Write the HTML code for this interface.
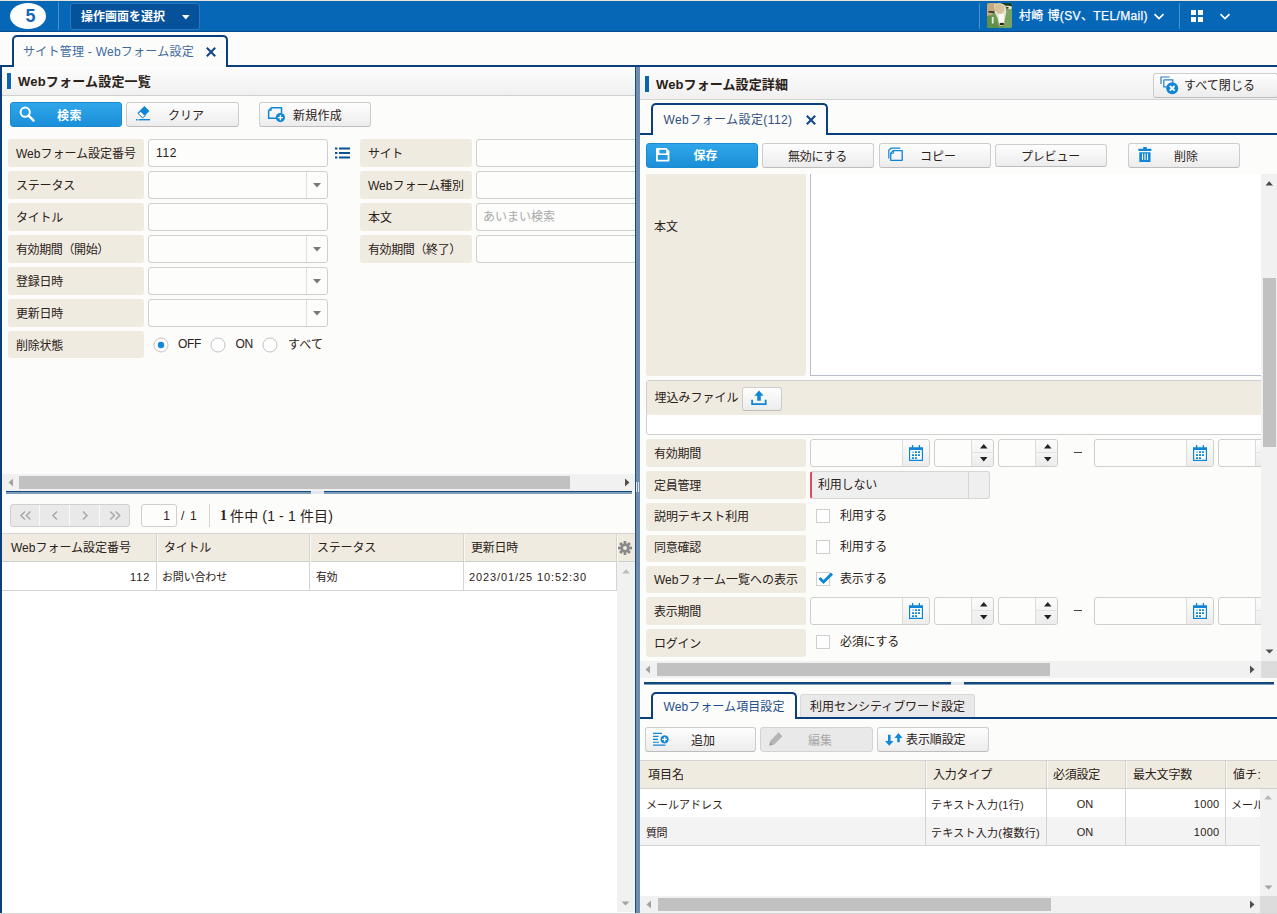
<!DOCTYPE html>
<html lang="ja"><head><meta charset="utf-8"><title>サイト管理 - Webフォーム設定</title>
<style>
html,body{margin:0;padding:0;}
body{width:1277px;height:914px;overflow:hidden;background:#fcfcfa;font-family:"Liberation Sans", "Noto Sans CJK JP", sans-serif;position:relative;}
#r{position:absolute;left:0;top:0;width:1277px;height:914px;overflow:hidden;}
#r div,#r span,#r svg{position:absolute;}
.t{white-space:nowrap;}
.i{display:block;overflow:visible;}
.btn{box-sizing:border-box;border:1px solid #cdcdcd;border-bottom-color:#bdbdbd;border-radius:3px;background:linear-gradient(#fefefe,#ececec);}
.btn.pri{border-color:#1b8ad0;background:linear-gradient(#2fa6ea,#1b8fd8);}
.btn.dis{background:#e9e9e9;border-color:#d3d3d3;}
.lab{background:#efebe0;border-radius:3px;}
.inp{box-sizing:border-box;border:1px solid #cfcfcf;border-radius:3px;background:#fdfdfc;}
</style></head>
<body><div id="r">
<div style="left:0px;top:0px;width:1277px;height:31.8px;background:#0667b7;border-bottom:1.6px solid #064b90;box-sizing:border-box;"></div>
<div style="left:0px;top:0px;width:1277px;height:0.8px;background:#e9e4da;"></div>
<svg class="i" style="left:10px;top:3px;" width="36" height="26" viewBox="0 0 36 26"><ellipse cx="18" cy="13" rx="18" ry="13" fill="#fff"/></svg>
<span id="t1" class="t" style="top:6.3px;font-size:18px;line-height:20px;color:#1668b5;font-weight:bold;left:-119.5px;width:300px;text-align:center;">5</span>
<div style="left:58px;top:2px;width:1px;height:28px;background:#4a8fcc;"></div>
<div style="left:70px;top:2.5px;width:129.5px;height:27px;background:#05529b;border:1px solid #2d78bd;border-radius:3px;box-sizing:border-box;"></div>
<span id="t2" class="t" style="top:7.0px;font-size:12px;line-height:20px;color:#fff;letter-spacing:-0.002px;font-weight:bold;left:81px;">操作画面を選択</span>
<svg class="i" style="left:181.8px;top:14.7px;" width="8" height="5" viewBox="0 0 8 5"><path d="M0 0h7.6L3.8 4.5z" fill="#fff"/></svg>
<div style="left:979px;top:3px;width:1px;height:26px;background:#4a8fcc;"></div>
<svg class="i" style="left:987px;top:3px;" width="25" height="25" viewBox="0 0 25 25"><defs><clipPath id="av"><rect width="25" height="25" rx="2.2"/></clipPath><filter id="bl" x="-20%" y="-20%" width="140%" height="140%"><feGaussianBlur stdDeviation="0.7"/></filter></defs><g clip-path="url(#av)"><rect width="25" height="25" fill="#6d9a52"/><g filter="url(#bl)"><path d="M0 0h9l-2 9-3 4-4 1z" fill="#c2aa7c"/><path d="M14 0h11v3l-10-1z" fill="#1d3b2a"/><path d="M0 13l5-1 1 5 4 3 1 5H0z" fill="#5f8f4a"/><path d="M18 8l7-3v20h-8z" fill="#79a45e"/><path d="M7 2c3-2.500 9-2.500 11.500 1l.8 6-1.300 6-1 6.500c-1 2-4 2-5 0l-1.500-6.500L8 10z" fill="#e9e2d0"/><path d="M8 2.500c3-2 7-2 9.500 0.500l-.5 5-3 3-3-.5-3-3z" fill="#d6c39c"/><path d="M11.500 11h5.500l-.5 9.500h-4z" fill="#fbfaf6"/><ellipse cx="21.500" cy="4.600" rx="3.200" ry="1.700" fill="#f3efe6"/><ellipse cx="20.300" cy="4.800" rx="1.600" ry="0.900" fill="#3a2f2a"/><path d="M1.500 8l5.500.3v1.600l-5.500-.3z" fill="#2f2a24"/><rect x="4.800" y="14" width="1.800" height="6.500" fill="#efeadf"/><ellipse cx="14.800" cy="21" rx="2.300" ry="1.300" fill="#27211f"/></g></g></svg>
<span id="t3" class="t" style="top:6.199999999999999px;font-size:12px;line-height:20px;color:#fff;letter-spacing:0.371px;left:1019px;-webkit-text-stroke:0.25px #fff;">村崎 博(SV、TEL/Mail)</span>
<svg class="i" style="left:1153px;top:13px;" width="12" height="7" viewBox="0 0 12 7"><path d="M1.5 1.2L6 5.5l4.5-4.3" fill="none" stroke="#fff" stroke-width="1.7"/></svg>
<div style="left:1179px;top:3px;width:1px;height:26px;background:#4a8fcc;"></div>
<svg class="i" style="left:1191px;top:10px;" width="12.5" height="12.5" viewBox="0 0 12.5 12.5"><path d="M0 0h5v5H0zM7 0h5v5H7zM0 7h5v5H0zM7 7h5v5H7z" fill="#fff"/></svg>
<svg class="i" style="left:1219px;top:13px;" width="12" height="7" viewBox="0 0 12 7"><path d="M1.5 1.2L6 5.5l4.5-4.3" fill="none" stroke="#fff" stroke-width="1.7"/></svg>
<div style="left:0px;top:64.8px;width:1277px;height:2px;background:#0b3f7b;"></div>
<div style="left:11.5px;top:34.8px;width:216.5px;height:32px;border:2px solid #0b3f7b;border-bottom:none;border-radius:5px 5px 0 0;background:#fcfcfa;box-sizing:border-box;"></div>
<span id="t4" class="t" style="top:42.0px;font-size:12px;line-height:20px;color:#3f6a9e;letter-spacing:0.249px;left:23px;">サイト管理 - Webフォーム設定</span>
<svg class="i" style="left:205.6px;top:47.4px;" width="10" height="10" viewBox="0 0 10 10"><path d="M0.8 0.8l8.4 8.4M9.2 0.8l-8.400 8.4" stroke="#174886" stroke-width="2.1" fill="none"/></svg>
<div style="left:0px;top:67px;width:2.2px;height:847px;background:#0b3f7b;"></div>
<div style="left:2px;top:67px;width:633px;height:28px;background:linear-gradient(#fdfdfd,#f0f0f0);border-bottom:1px solid #d0d0d0;"></div>
<div style="left:7px;top:73px;width:4px;height:16px;background:#0b63b4;"></div>
<span id="t5" class="t" style="top:72.0px;font-size:13px;line-height:20px;color:#2b2118;letter-spacing:0.199px;font-weight:bold;left:18px;">Webフォーム設定一覧</span>
<div class="btn pri" style="left:10px;top:102px;width:112px;height:25px;"></div>
<svg class="i" style="left:19px;top:106px;" width="16" height="16" viewBox="0 0 16 16"><circle cx="6.2" cy="6.2" r="4.6" fill="none" stroke="#fff" stroke-width="2"/><path d="M9.6 9.6l5 5" stroke="#fff" stroke-width="2.4" stroke-linecap="round"/></svg>
<span id="t6" class="t" style="top:105.8px;font-size:12px;line-height:20px;color:#fff;letter-spacing:0.500px;font-weight:bold;left:57px;">検索</span>
<div class="btn" style="left:126px;top:102px;width:113px;height:25px;"></div>
<svg class="i" style="left:135px;top:105px;" width="16" height="17" viewBox="0 0 16 17"><path d="M9.4 1L14.4 6 7.5 12.9 2.5 7.9z" fill="#0f85d8"/><path d="M5.6 6.2l4.6 4.6-2.7 2.1-4.2-4.3z" fill="#fff" stroke="#0f85d8" stroke-width="1"/><path d="M5 14.7h10" stroke="#0f85d8" stroke-width="1.4"/><path d="M1 14.7h4" stroke="#0f85d8" stroke-width="1.4" stroke-dasharray="1 0.6"/></svg>
<span id="t7" class="t" style="top:105.8px;font-size:12px;line-height:20px;color:#2b2118;letter-spacing:-0.005px;left:168px;">クリア</span>
<div class="btn" style="left:259px;top:102px;width:112px;height:25px;"></div>
<svg class="i" style="left:267px;top:106px;" width="19" height="17" viewBox="0 0 19 17"><path d="M4.2 1.75H14.5V7M1.65 4.3V12.25H9" fill="none" stroke="#0f85d8" stroke-width="1.5"/><path d="M1.3 4.6L4.5 1.4M1.65 4.3H4.2V1.75" fill="none" stroke="#0f85d8" stroke-width="1.1"/><circle cx="13.4" cy="11.6" r="4.6" fill="#0f85d8"/><path d="M13.4 9v5.2M10.8 11.6h5.2" stroke="#fff" stroke-width="1.4"/></svg>
<span id="t8" class="t" style="top:105.8px;font-size:12px;line-height:20px;color:#2b2118;letter-spacing:0.250px;left:293px;">新規作成</span>
<div class="lab" style="left:8px;top:139px;width:136px;height:28px;"></div>
<span id="t9" class="t" style="top:144.0px;font-size:12px;line-height:20px;color:#2b2118;letter-spacing:-0.010px;left:16px;">Webフォーム設定番号</span>
<div class="lab" style="left:8px;top:171px;width:136px;height:28px;"></div>
<span id="t10" class="t" style="top:176.0px;font-size:12px;line-height:20px;color:#2b2118;letter-spacing:-0.203px;left:16px;">ステータス</span>
<div class="lab" style="left:8px;top:203px;width:136px;height:28px;"></div>
<span id="t11" class="t" style="top:208.0px;font-size:12px;line-height:20px;color:#2b2118;letter-spacing:-0.250px;left:16px;">タイトル</span>
<div class="lab" style="left:8px;top:235px;width:136px;height:28px;"></div>
<span id="t12" class="t" style="top:240.0px;font-size:12px;line-height:20px;color:#2b2118;letter-spacing:-0.377px;left:16px;">有効期間（開始）</span>
<div class="lab" style="left:8px;top:267px;width:136px;height:28px;"></div>
<span id="t13" class="t" style="top:272.0px;font-size:12px;line-height:20px;color:#2b2118;letter-spacing:-0.250px;left:16px;">登録日時</span>
<div class="lab" style="left:8px;top:299px;width:136px;height:28px;"></div>
<span id="t14" class="t" style="top:304.0px;font-size:12px;line-height:20px;color:#2b2118;letter-spacing:-0.250px;left:16px;">更新日時</span>
<div class="lab" style="left:8px;top:331px;width:136px;height:27px;"></div>
<span id="t15" class="t" style="top:336.0px;font-size:12px;line-height:20px;color:#2b2118;letter-spacing:-0.250px;left:16px;">削除状態</span>
<div class="inp" style="left:148px;top:139px;width:180px;height:28px;"></div>
<div class="inp" style="left:148px;top:171px;width:180px;height:28px;"></div>
<div style="left:306px;top:172px;width:1px;height:26px;background:#e0e0e0;"></div>
<svg class="i" style="left:313px;top:183px;" width="8" height="5" viewBox="0 0 8 5"><path d="M0 0h8L4 4.5z" fill="#777"/></svg>
<div class="inp" style="left:148px;top:203px;width:180px;height:28px;"></div>
<div class="inp" style="left:148px;top:235px;width:180px;height:28px;"></div>
<div style="left:306px;top:236px;width:1px;height:26px;background:#e0e0e0;"></div>
<svg class="i" style="left:313px;top:247px;" width="8" height="5" viewBox="0 0 8 5"><path d="M0 0h8L4 4.5z" fill="#777"/></svg>
<div class="inp" style="left:148px;top:267px;width:180px;height:28px;"></div>
<div style="left:306px;top:268px;width:1px;height:26px;background:#e0e0e0;"></div>
<svg class="i" style="left:313px;top:279px;" width="8" height="5" viewBox="0 0 8 5"><path d="M0 0h8L4 4.5z" fill="#777"/></svg>
<div class="inp" style="left:148px;top:299px;width:180px;height:28px;"></div>
<div style="left:306px;top:300px;width:1px;height:26px;background:#e0e0e0;"></div>
<svg class="i" style="left:313px;top:311px;" width="8" height="5" viewBox="0 0 8 5"><path d="M0 0h8L4 4.5z" fill="#777"/></svg>
<span id="t16" class="t" style="top:143.0px;font-size:12px;line-height:20px;color:#2b2118;letter-spacing:0.620px;left:156px;">112</span>
<svg class="i" style="left:153.4px;top:337.4px;" width="16" height="16" viewBox="0 0 16 16"><circle cx="8" cy="8" r="7" fill="#fff" stroke="#c4c4c4" stroke-width="1"/><circle cx="8" cy="8" r="3.2" fill="#1487db"/></svg>
<svg class="i" style="left:210.4px;top:337.4px;" width="16" height="16" viewBox="0 0 16 16"><circle cx="8" cy="8" r="7" fill="#fff" stroke="#c4c4c4" stroke-width="1"/></svg>
<svg class="i" style="left:262.4px;top:337.4px;" width="16" height="16" viewBox="0 0 16 16"><circle cx="8" cy="8" r="7" fill="#fff" stroke="#c4c4c4" stroke-width="1"/></svg>
<span id="t17" class="t" style="top:334.4px;font-size:12px;line-height:20px;color:#2b2118;letter-spacing:-0.333px;left:178px;">OFF</span>
<span id="t18" class="t" style="top:334.4px;font-size:12px;line-height:20px;color:#2b2118;letter-spacing:-0.250px;left:235.5px;">ON</span>
<span id="t19" class="t" style="top:334.6px;font-size:12px;line-height:20px;color:#2b2118;letter-spacing:0.104px;left:288px;">すべて</span>
<svg class="i" style="left:335px;top:147px;" width="15" height="12" viewBox="0 0 15 12"><path d="M0 0.5h2.4v2H0zM4 0.5h11v2H4zM0 5h2.4v2H0zM4 5h11v2H4zM0 9.5h2.4v2H0zM4 9.5h11v2H4z" fill="#0b4f94"/></svg>
<div class="lab" style="left:360px;top:139px;width:112px;height:28px;"></div>
<span id="t20" class="t" style="top:144.0px;font-size:12px;line-height:20px;color:#2b2118;letter-spacing:-0.333px;left:368px;">サイト</span>
<div class="inp" style="left:476px;top:139px;width:162px;height:28px;"></div>
<div class="lab" style="left:360px;top:171px;width:112px;height:28px;"></div>
<span id="t21" class="t" style="top:176.0px;font-size:12px;line-height:20px;color:#2b2118;letter-spacing:-0.012px;left:368px;">Webフォーム種別</span>
<div class="inp" style="left:476px;top:171px;width:162px;height:28px;"></div>
<div class="lab" style="left:360px;top:203px;width:112px;height:28px;"></div>
<span id="t22" class="t" style="top:208.0px;font-size:12px;line-height:20px;color:#2b2118;letter-spacing:0.000px;left:368px;">本文</span>
<div class="inp" style="left:476px;top:203px;width:162px;height:28px;"></div>
<div class="lab" style="left:360px;top:235px;width:112px;height:28px;"></div>
<span id="t23" class="t" style="top:240.0px;font-size:12px;line-height:20px;color:#2b2118;letter-spacing:-0.377px;left:368px;">有効期間（終了）</span>
<div class="inp" style="left:476px;top:235px;width:162px;height:28px;"></div>
<span id="t24" class="t" style="top:207.3px;font-size:12px;line-height:20px;color:#a9a9a9;letter-spacing:0.000px;left:483px;">あいまい検索</span>
<div style="left:2px;top:474px;width:633px;height:16.5px;background:#f1f1f1;"></div>
<svg class="i" style="left:8px;top:478px;" width="6" height="9" viewBox="0 0 6 9"><path d="M5 0.5v8L0.5 4.5z" fill="#a3a3a3"/></svg>
<div style="left:19px;top:476px;width:551px;height:13px;background:#c1c1c1;"></div>
<svg class="i" style="left:624px;top:478px;" width="6" height="9" viewBox="0 0 6 9"><path d="M1 0.5v8l4.5-4z" fill="#505050"/></svg>
<div style="left:6px;top:490.6px;width:626px;height:1.6px;background:#12477f;"></div>
<div style="left:6px;top:492.2px;width:626px;height:1.4px;background:#7f9cba;"></div>
<div style="left:311px;top:490.6px;width:13px;height:3px;background:#e4e9ef;"></div>
<div style="left:10px;top:504px;width:119.5px;height:23px;background:#e9e9e9;border:1px solid #cfcfcf;border-radius:3px;box-sizing:border-box;"></div>
<div style="left:39px;top:505px;width:1px;height:21px;background:#f9f9f9;"></div>
<div style="left:69.2px;top:505px;width:1px;height:21px;background:#f9f9f9;"></div>
<div style="left:99.2px;top:505px;width:1px;height:21px;background:#f9f9f9;"></div>
<svg class="i" style="left:20px;top:511px;" width="12" height="9" viewBox="0 0 12 9"><path d="M5 0.5L1 4.5 5 8.500M10.400 0.5L6.400 4.5 10.400 8.500" fill="none" stroke="#a8a8a8" stroke-width="1.5"/></svg>
<svg class="i" style="left:51px;top:511px;" width="8" height="9" viewBox="0 0 8 9"><path d="M6 0.5L2 4.5 6 8.500" fill="none" stroke="#a8a8a8" stroke-width="1.5"/></svg>
<svg class="i" style="left:81px;top:511px;" width="8" height="9" viewBox="0 0 8 9"><path d="M2 0.5L6 4.5 2 8.500" fill="none" stroke="#a8a8a8" stroke-width="1.5"/></svg>
<svg class="i" style="left:109px;top:511px;" width="12" height="9" viewBox="0 0 12 9"><path d="M1.300 0.5L5.300 4.5 1.300 8.500M6.700 0.5L10.700 4.5 6.700 8.500" fill="none" stroke="#a8a8a8" stroke-width="1.5"/></svg>
<div class="inp" style="left:141px;top:504px;width:36px;height:23px;"></div>
<span id="t25" class="t" style="top:506.0px;font-size:12px;line-height:20px;color:#2b2118;right:1107px;">1</span>
<span id="t26" class="t" style="top:506.0px;font-size:12px;line-height:20px;color:#2b2118;letter-spacing:1.219px;left:181px;">/ 1</span>
<div style="left:209px;top:504px;width:1px;height:23px;background:#d5d5d5;"></div>
<span id="t27" class="t" style="top:506.0px;font-size:14px;line-height:20px;color:#2b2118;font-weight:bold;left:220px;font-family:&quot;Liberation Serif&quot;,serif;">1</span>
<span id="t28" class="t" style="top:506.0px;font-size:14px;line-height:20px;color:#2b2118;letter-spacing:0.144px;left:230px;">件中 (1 - 1 件目)</span>
<div style="left:2px;top:533px;width:633px;height:29px;background:#efebe0;border-top:1px solid #d4d4d4;border-bottom:1px solid #cfcfcf;box-sizing:border-box;"></div>
<div style="left:156px;top:534px;width:1px;height:57px;background:#d4d4d4;"></div>
<div style="left:157px;top:534px;width:1px;height:28px;background:#faf8f2;"></div>
<div style="left:309px;top:534px;width:1px;height:57px;background:#d4d4d4;"></div>
<div style="left:310px;top:534px;width:1px;height:28px;background:#faf8f2;"></div>
<div style="left:463px;top:534px;width:1px;height:57px;background:#d4d4d4;"></div>
<div style="left:464px;top:534px;width:1px;height:28px;background:#faf8f2;"></div>
<div style="left:616px;top:534px;width:1px;height:57px;background:#d4d4d4;"></div>
<div style="left:617px;top:534px;width:1px;height:28px;background:#faf8f2;"></div>
<span id="t29" class="t" style="top:538.4px;font-size:12px;line-height:20px;color:#2b2118;letter-spacing:-0.010px;left:11px;">Webフォーム設定番号</span>
<span id="t30" class="t" style="top:538.4px;font-size:12px;line-height:20px;color:#2b2118;letter-spacing:-0.250px;left:164px;">タイトル</span>
<span id="t31" class="t" style="top:538.4px;font-size:12px;line-height:20px;color:#2b2118;letter-spacing:-0.203px;left:317px;">ステータス</span>
<span id="t32" class="t" style="top:538.4px;font-size:12px;line-height:20px;color:#2b2118;letter-spacing:-0.250px;left:471px;">更新日時</span>
<svg class="i" style="left:618px;top:541px;" width="14" height="14" viewBox="0 0 14 14"><g fill="#8a8a8a"><circle cx="7" cy="7" r="4.6"/><rect x="5.6" y="0" width="2.8" height="14" transform="rotate(0 7 7)"/><rect x="5.6" y="0" width="2.8" height="14" transform="rotate(45 7 7)"/><rect x="5.6" y="0" width="2.8" height="14" transform="rotate(90 7 7)"/><rect x="5.6" y="0" width="2.8" height="14" transform="rotate(135 7 7)"/></g><circle cx="7" cy="7" r="2" fill="#efebe0"/></svg>
<div style="left:2px;top:562px;width:614px;height:28px;background:#fff;border-bottom:1px solid #d4d4d4;"></div>
<div style="left:2px;top:591px;width:615px;height:321px;background:#fff;"></div>
<div style="left:156px;top:562px;width:1px;height:28px;background:#d4d4d4;"></div>
<div style="left:309px;top:562px;width:1px;height:28px;background:#d4d4d4;"></div>
<div style="left:463px;top:562px;width:1px;height:28px;background:#d4d4d4;"></div>
<div style="left:616px;top:562px;width:1px;height:28px;background:#d4d4d4;"></div>
<span id="t33" class="t" style="top:567.0px;font-size:11px;line-height:20px;color:#2b2118;right:1126.5px;letter-spacing:1px;">112</span>
<span id="t34" class="t" style="top:567.0px;font-size:11px;line-height:20px;color:#2b2118;letter-spacing:-0.167px;left:162px;">お問い合わせ</span>
<span id="t35" class="t" style="top:567.0px;font-size:11px;line-height:20px;color:#2b2118;letter-spacing:-0.500px;left:316px;">有効</span>
<span id="t36" class="t" style="top:567.0px;font-size:11px;line-height:20px;color:#2b2118;letter-spacing:0.898px;left:469px;">2023/01/25 10:52:30</span>
<div style="left:617px;top:562px;width:18px;height:350px;background:#f1f1f1;"></div>
<svg class="i" style="left:621.5px;top:569px;" width="9" height="5" viewBox="0 0 9 5"><path d="M0.3 4.5h7.6L4.1 0.2z" fill="#bcbcbc"/></svg>
<svg class="i" style="left:621px;top:901px;" width="9" height="5" viewBox="0 0 9 5"><path d="M0.5 0.5h8L4.5 4.5z" fill="#a3a3a3"/></svg>
<div style="left:635px;top:67px;width:5px;height:847px;background:#6f8eae;"></div>
<div style="left:634.7px;top:67px;width:1.5px;height:847px;background:#1a4a82;"></div>
<div style="left:636px;top:482px;width:3px;height:10px;background:repeating-linear-gradient(90deg,#dfe6ee 0 1px,#6b8aab 1px 2px);"></div>
<div style="left:640px;top:67px;width:637px;height:32px;background:linear-gradient(#fdfdfd,#f0f0f0);border-bottom:1px solid #d4d4d4;"></div>
<div style="left:645px;top:76px;width:4px;height:16px;background:#0b63b4;"></div>
<span id="t37" class="t" style="top:75.3px;font-size:13px;line-height:20px;color:#2b2118;letter-spacing:0.107px;font-weight:bold;left:656px;">Webフォーム設定詳細</span>
<div class="btn" style="left:1153px;top:73px;width:125px;height:25px;"></div>
<svg class="i" style="left:1160px;top:76px;" width="19" height="19" viewBox="0 0 19 19"><path d="M1 8V1h8.5" fill="none" stroke="#2b7fc8" stroke-width="1.2"/><path d="M3.8 3.8h9v3M3.8 3.8v7h3" fill="none" stroke="#2b7fc8" stroke-width="1.2"/><circle cx="12.2" cy="12.2" r="6" fill="#0f85d8"/><path d="M9.8 9.8l4.8 4.8M14.6 9.8l-4.8 4.8" stroke="#fff" stroke-width="1.8"/></svg>
<span id="t38" class="t" style="top:76.0px;font-size:12px;line-height:20px;color:#2b2118;letter-spacing:0.052px;left:1184px;">すべて閉じる</span>
<div style="left:640px;top:132.7px;width:637px;height:1.9px;background:#0b3f7b;"></div>
<div style="left:651px;top:103px;width:177px;height:32px;border:2px solid #0b3f7b;border-bottom:none;border-radius:5px 5px 0 0;background:#fcfcfa;box-sizing:border-box;"></div>
<span id="t39" class="t" style="top:110.3px;font-size:12px;line-height:20px;color:#2f4f80;letter-spacing:0.412px;left:663.5px;">Webフォーム設定(112)</span>
<svg class="i" style="left:805.6px;top:115.4px;" width="10" height="10" viewBox="0 0 10 10"><path d="M0.8 0.8l8.4 8.4M9.2 0.8l-8.400 8.4" stroke="#174886" stroke-width="2.1" fill="none"/></svg>
<div class="btn pri" style="left:646px;top:143px;width:112px;height:25px;"></div>
<svg class="i" style="left:655.7px;top:148.2px;" width="14" height="14" viewBox="0 0 14 14"><path d="M0.8 0h9.7L13.4 2.9V12.7a.8.8 0 0 1-.8.8H0.8a.8.8 0 0 1-.8-.8V0.8A.8.8 0 0 1 .8 0z" fill="#fff"/><rect x="3.4" y="1.8" width="6.8" height="3.6" fill="#249be2"/><rect x="1.8" y="7" width="9.8" height="4.8" fill="#2097de"/></svg>
<span id="t40" class="t" style="top:146.2px;font-size:12px;line-height:20px;color:#fff;letter-spacing:0.000px;font-weight:bold;left:693.5px;">保存</span>
<div class="btn" style="left:762px;top:143px;width:112px;height:25px;"></div>
<span id="t41" class="t" style="top:147.0px;font-size:12px;line-height:20px;color:#2b2118;letter-spacing:-0.225px;left:788px;">無効にする</span>
<div class="btn" style="left:879px;top:143px;width:112px;height:25px;"></div>
<svg class="i" style="left:888px;top:147px;" width="16" height="15" viewBox="0 0 16 15"><path d="M5.200 3.600h9v9.700H2.700V6.100z" fill="none" stroke="#0f85d8" stroke-width="1.3" stroke-linejoin="round"/><path d="M0.800 11.500V3.300L3 1.200h9.300" fill="none" stroke="#0f85d8" stroke-width="1.2"/><path d="M2.700 6.300h2.700V3.600" fill="none" stroke="#0f85d8" stroke-width="1"/></svg>
<span id="t42" class="t" style="top:147.0px;font-size:12px;line-height:20px;color:#2b2118;letter-spacing:-0.005px;left:920px;">コピー</span>
<div class="btn" style="left:995px;top:144px;width:112px;height:23px;"></div>
<span id="t43" class="t" style="top:147.0px;font-size:12px;line-height:20px;color:#2b2118;letter-spacing:-0.203px;left:1021px;">プレビュー</span>
<div class="btn" style="left:1128px;top:143px;width:112px;height:25px;"></div>
<svg class="i" style="left:1137.6px;top:147px;" width="14" height="15" viewBox="0 0 14 15"><path d="M0.4 1.7h13v2.3h-13zM5.2 0h3.6v2h-3.6zM1.3 5.2h11.2v9.7H1.3z" fill="#0f85d8"/><path d="M4.5 6.5v6.5M7 6.5v6.5M9.5 6.5v6.5" stroke="#fff" stroke-width="1.1"/></svg>
<span id="t44" class="t" style="top:147.0px;font-size:12px;line-height:20px;color:#2b2118;letter-spacing:0.000px;left:1174px;">削除</span>
<div style="left:646px;top:173.5px;width:160px;height:202.3px;background:#efebe0;border-radius:0 0 3px 3px;"></div>
<span id="t45" class="t" style="top:217.0px;font-size:12px;line-height:20px;color:#2b2118;letter-spacing:0.000px;left:654px;">本文</span>
<div style="left:810px;top:173.5px;width:460px;height:202.3px;background:#fff;border:1px solid #b9bdd0;border-top:none;box-sizing:border-box;"></div>
<div style="left:646px;top:380px;width:620px;height:55px;background:#fff;border:1px solid #d0d0d0;border-radius:3px;box-sizing:border-box;"></div>
<div style="left:647px;top:381px;width:618px;height:33.7px;background:#efebe0;"></div>
<span id="t46" class="t" style="top:388.2px;font-size:12px;line-height:20px;color:#2b2118;letter-spacing:-0.002px;left:654.5px;">埋込みファイル</span>
<div class="btn" style="left:742px;top:387px;width:40px;height:24px;"></div>
<svg class="i" style="left:751.4px;top:390px;" width="16" height="16" viewBox="0 0 16 16"><path d="M8 0.5L3.4 5.7h2.8v5h3.6v-5h2.8z" fill="#0f85d8"/><path d="M1.1 9.8v4.3h13.6V9.8" fill="none" stroke="#0f85d8" stroke-width="1.8"/></svg>
<div class="lab" style="left:646px;top:439px;width:160px;height:28px;"></div>
<span id="t47" class="t" style="top:444.0px;font-size:12px;line-height:20px;color:#2b2118;letter-spacing:-0.250px;left:654px;">有効期間</span>
<div class="lab" style="left:646px;top:471px;width:160px;height:28px;"></div>
<span id="t48" class="t" style="top:476.0px;font-size:12px;line-height:20px;color:#2b2118;letter-spacing:-0.250px;left:654px;">定員管理</span>
<div class="lab" style="left:646px;top:503px;width:160px;height:27.5px;"></div>
<span id="t49" class="t" style="top:507.4px;font-size:12px;line-height:20px;color:#2b2118;letter-spacing:-0.082px;left:654px;">説明テキスト利用</span>
<div class="lab" style="left:646px;top:534.5px;width:160px;height:27.3px;"></div>
<span id="t50" class="t" style="top:538.4px;font-size:12px;line-height:20px;color:#2b2118;letter-spacing:-0.250px;left:654px;">同意確認</span>
<div class="lab" style="left:646px;top:565.8px;width:160px;height:27.2px;"></div>
<span id="t51" class="t" style="top:570.4px;font-size:12px;line-height:20px;color:#2b2118;letter-spacing:-0.008px;left:654px;">Webフォーム一覧への表示</span>
<div class="lab" style="left:646px;top:597px;width:160px;height:28px;"></div>
<span id="t52" class="t" style="top:602.0px;font-size:12px;line-height:20px;color:#2b2118;letter-spacing:-0.250px;left:654px;">表示期間</span>
<div class="lab" style="left:646px;top:629px;width:160px;height:28px;"></div>
<span id="t53" class="t" style="top:634.0px;font-size:12px;line-height:20px;color:#2b2118;letter-spacing:-0.250px;left:654px;">ログイン</span>
<div class="inp" style="left:810px;top:439px;width:120px;height:28px;"></div>
<div style="left:902px;top:440px;width:27px;height:26px;background:linear-gradient(#fcfcfc,#ececec);border-left:1px solid #dcdcdc;border-radius:0 3px 3px 0;box-sizing:border-box;"></div>
<svg class="i" style="left:909px;top:445px;" width="14" height="16" viewBox="0 0 14 16"><path d="M0.6 3.100h12.800v12.300H0.6z" fill="#fff" stroke="#0f85d8" stroke-width="1.2"/><path d="M0 2.500h14v2.500H0z" fill="#0f85d8"/><path d="M3.600 0v3M10.400 0v3" stroke="#0f85d8" stroke-width="1.3"/><path d="M6 6.200h2v1.900H6zM9 6.200h2v1.900H9zM3 9.200h2v1.900H3zM6 9.200h2v1.900H6zM9 9.200h2v1.900H9zM3 12.200h2v1.800H3zM6 12.200h2v1.800H6z" fill="#0f85d8"/><path d="M3 6.200h2v1.900H3z" fill="#9ccbee"/></svg>
<div class="inp" style="left:1094px;top:439px;width:120px;height:28px;"></div>
<div style="left:1186px;top:440px;width:27px;height:26px;background:linear-gradient(#fcfcfc,#ececec);border-left:1px solid #dcdcdc;border-radius:0 3px 3px 0;box-sizing:border-box;"></div>
<svg class="i" style="left:1193px;top:445px;" width="14" height="16" viewBox="0 0 14 16"><path d="M0.6 3.100h12.800v12.300H0.6z" fill="#fff" stroke="#0f85d8" stroke-width="1.2"/><path d="M0 2.500h14v2.500H0z" fill="#0f85d8"/><path d="M3.600 0v3M10.400 0v3" stroke="#0f85d8" stroke-width="1.3"/><path d="M6 6.200h2v1.900H6zM9 6.200h2v1.900H9zM3 9.200h2v1.900H3zM6 9.200h2v1.900H6zM9 9.200h2v1.900H9zM3 12.200h2v1.800H3zM6 12.200h2v1.800H6z" fill="#0f85d8"/><path d="M3 6.200h2v1.900H3z" fill="#9ccbee"/></svg>
<div class="inp" style="left:934px;top:439px;width:60px;height:28px;"></div>
<div style="left:971px;top:440px;width:22px;height:26px;background:linear-gradient(#fcfcfc,#ececec);border-left:1px solid #dcdcdc;border-radius:0 3px 3px 0;box-sizing:border-box;"></div>
<div style="left:972px;top:452px;width:21px;height:1px;background:#e2e2e2;"></div>
<svg class="i" style="left:979.5px;top:444px;" width="8" height="5" viewBox="0 0 8 5"><path d="M0 4.5h7.5L3.75 0z" fill="#222"/></svg>
<svg class="i" style="left:979.5px;top:456.5px;" width="8" height="5" viewBox="0 0 8 5"><path d="M0 0h7.5L3.75 4.5z" fill="#222"/></svg>
<div class="inp" style="left:998px;top:439px;width:60px;height:28px;"></div>
<div style="left:1035px;top:440px;width:22px;height:26px;background:linear-gradient(#fcfcfc,#ececec);border-left:1px solid #dcdcdc;border-radius:0 3px 3px 0;box-sizing:border-box;"></div>
<div style="left:1036px;top:452px;width:21px;height:1px;background:#e2e2e2;"></div>
<svg class="i" style="left:1043.5px;top:444px;" width="8" height="5" viewBox="0 0 8 5"><path d="M0 4.5h7.5L3.75 0z" fill="#222"/></svg>
<svg class="i" style="left:1043.5px;top:456.5px;" width="8" height="5" viewBox="0 0 8 5"><path d="M0 0h7.5L3.75 4.5z" fill="#222"/></svg>
<div class="inp" style="left:1218px;top:439px;width:60px;height:28px;"></div>
<div style="left:1255px;top:440px;width:22px;height:26px;background:linear-gradient(#fcfcfc,#ececec);border-left:1px solid #dcdcdc;border-radius:0 3px 3px 0;box-sizing:border-box;"></div>
<div style="left:1256px;top:452px;width:21px;height:1px;background:#e2e2e2;"></div>
<svg class="i" style="left:1263.5px;top:444px;" width="8" height="5" viewBox="0 0 8 5"><path d="M0 4.5h7.5L3.75 0z" fill="#222"/></svg>
<svg class="i" style="left:1263.5px;top:456.5px;" width="8" height="5" viewBox="0 0 8 5"><path d="M0 0h7.5L3.75 4.5z" fill="#222"/></svg>
<div style="left:1074px;top:452.4px;width:8px;height:1px;background:#4a4038;"></div>
<div class="inp" style="left:810px;top:597px;width:120px;height:28px;"></div>
<div style="left:902px;top:598px;width:27px;height:26px;background:linear-gradient(#fcfcfc,#ececec);border-left:1px solid #dcdcdc;border-radius:0 3px 3px 0;box-sizing:border-box;"></div>
<svg class="i" style="left:909px;top:603px;" width="14" height="16" viewBox="0 0 14 16"><path d="M0.6 3.100h12.800v12.300H0.6z" fill="#fff" stroke="#0f85d8" stroke-width="1.2"/><path d="M0 2.500h14v2.500H0z" fill="#0f85d8"/><path d="M3.600 0v3M10.400 0v3" stroke="#0f85d8" stroke-width="1.3"/><path d="M6 6.200h2v1.900H6zM9 6.200h2v1.900H9zM3 9.200h2v1.900H3zM6 9.200h2v1.900H6zM9 9.200h2v1.900H9zM3 12.200h2v1.800H3zM6 12.200h2v1.800H6z" fill="#0f85d8"/><path d="M3 6.200h2v1.900H3z" fill="#9ccbee"/></svg>
<div class="inp" style="left:1094px;top:597px;width:120px;height:28px;"></div>
<div style="left:1186px;top:598px;width:27px;height:26px;background:linear-gradient(#fcfcfc,#ececec);border-left:1px solid #dcdcdc;border-radius:0 3px 3px 0;box-sizing:border-box;"></div>
<svg class="i" style="left:1193px;top:603px;" width="14" height="16" viewBox="0 0 14 16"><path d="M0.6 3.100h12.800v12.300H0.6z" fill="#fff" stroke="#0f85d8" stroke-width="1.2"/><path d="M0 2.500h14v2.500H0z" fill="#0f85d8"/><path d="M3.600 0v3M10.400 0v3" stroke="#0f85d8" stroke-width="1.3"/><path d="M6 6.200h2v1.900H6zM9 6.200h2v1.900H9zM3 9.200h2v1.900H3zM6 9.200h2v1.900H6zM9 9.200h2v1.900H9zM3 12.200h2v1.800H3zM6 12.200h2v1.800H6z" fill="#0f85d8"/><path d="M3 6.200h2v1.900H3z" fill="#9ccbee"/></svg>
<div class="inp" style="left:934px;top:597px;width:60px;height:28px;"></div>
<div style="left:971px;top:598px;width:22px;height:26px;background:linear-gradient(#fcfcfc,#ececec);border-left:1px solid #dcdcdc;border-radius:0 3px 3px 0;box-sizing:border-box;"></div>
<div style="left:972px;top:610px;width:21px;height:1px;background:#e2e2e2;"></div>
<svg class="i" style="left:979.5px;top:602px;" width="8" height="5" viewBox="0 0 8 5"><path d="M0 4.5h7.5L3.75 0z" fill="#222"/></svg>
<svg class="i" style="left:979.5px;top:614.5px;" width="8" height="5" viewBox="0 0 8 5"><path d="M0 0h7.5L3.75 4.5z" fill="#222"/></svg>
<div class="inp" style="left:998px;top:597px;width:60px;height:28px;"></div>
<div style="left:1035px;top:598px;width:22px;height:26px;background:linear-gradient(#fcfcfc,#ececec);border-left:1px solid #dcdcdc;border-radius:0 3px 3px 0;box-sizing:border-box;"></div>
<div style="left:1036px;top:610px;width:21px;height:1px;background:#e2e2e2;"></div>
<svg class="i" style="left:1043.5px;top:602px;" width="8" height="5" viewBox="0 0 8 5"><path d="M0 4.5h7.5L3.75 0z" fill="#222"/></svg>
<svg class="i" style="left:1043.5px;top:614.5px;" width="8" height="5" viewBox="0 0 8 5"><path d="M0 0h7.5L3.75 4.5z" fill="#222"/></svg>
<div class="inp" style="left:1218px;top:597px;width:60px;height:28px;"></div>
<div style="left:1255px;top:598px;width:22px;height:26px;background:linear-gradient(#fcfcfc,#ececec);border-left:1px solid #dcdcdc;border-radius:0 3px 3px 0;box-sizing:border-box;"></div>
<div style="left:1256px;top:610px;width:21px;height:1px;background:#e2e2e2;"></div>
<svg class="i" style="left:1263.5px;top:602px;" width="8" height="5" viewBox="0 0 8 5"><path d="M0 4.5h7.5L3.75 0z" fill="#222"/></svg>
<svg class="i" style="left:1263.5px;top:614.5px;" width="8" height="5" viewBox="0 0 8 5"><path d="M0 0h7.5L3.75 4.5z" fill="#222"/></svg>
<div style="left:1074px;top:610.4px;width:8px;height:1px;background:#4a4038;"></div>
<div style="left:810px;top:471px;width:180px;height:28px;background:#efefef;border:1px solid #d6d6d6;border-left:2px solid #e2495a;border-radius:3px;box-sizing:border-box;"></div>
<div style="left:968px;top:472px;width:1px;height:26px;background:#d6d6d6;"></div>
<span id="t54" class="t" style="top:474.7px;font-size:12px;line-height:20px;color:#2b2118;letter-spacing:-0.203px;left:818px;">利用しない</span>
<div style="left:816px;top:509px;width:14px;height:14px;background:#fff;border:1px solid #cfcfcf;box-sizing:border-box;"></div>
<span id="t55" class="t" style="top:506.0px;font-size:12px;line-height:20px;color:#2b2118;letter-spacing:-0.250px;left:840px;">利用する</span>
<div style="left:816px;top:540px;width:14px;height:14px;background:#fff;border:1px solid #cfcfcf;box-sizing:border-box;"></div>
<span id="t56" class="t" style="top:537.0px;font-size:12px;line-height:20px;color:#2b2118;letter-spacing:-0.250px;left:840px;">利用する</span>
<div style="left:816px;top:572px;width:14px;height:14px;background:#fff;border:1px solid #cfcfcf;box-sizing:border-box;"></div>
<svg class="i" style="left:818px;top:572px;" width="15" height="13" viewBox="0 0 15 13"><path d="M1.5 6l4 4L14 1.6" fill="none" stroke="#0f85d8" stroke-width="2.9"/></svg>
<span id="t57" class="t" style="top:569.0px;font-size:12px;line-height:20px;color:#2b2118;letter-spacing:-0.250px;left:840px;">表示する</span>
<div style="left:816px;top:635px;width:14px;height:14px;background:#fff;border:1px solid #cfcfcf;box-sizing:border-box;"></div>
<span id="t58" class="t" style="top:632.0px;font-size:12px;line-height:20px;color:#2b2118;letter-spacing:-0.225px;left:840px;">必須にする</span>
<div style="left:1261px;top:173.5px;width:16px;height:487.5px;background:#f1f1f1;"></div>
<div style="left:1263px;top:278px;width:13px;height:169px;background:#c1c1c1;"></div>
<svg class="i" style="left:1265px;top:180.5px;" width="9" height="5" viewBox="0 0 9 5"><path d="M0.5 4.5h7.5L4.25 0.3z" fill="#484848"/></svg>
<svg class="i" style="left:1265px;top:649px;" width="9" height="5" viewBox="0 0 9 5"><path d="M0.5 0.5h8L4.5 4.5z" fill="#505050"/></svg>
<div style="left:640px;top:661px;width:637px;height:17px;background:#f1f1f1;"></div>
<div style="left:1261px;top:661px;width:16px;height:17px;background:#dcdcdc;"></div>
<div style="left:657px;top:663px;width:393px;height:13px;background:#c1c1c1;"></div>
<svg class="i" style="left:645px;top:665px;" width="6" height="9" viewBox="0 0 6 9"><path d="M5 0.5v8L0.5 4.5z" fill="#a3a3a3"/></svg>
<svg class="i" style="left:1249px;top:665px;" width="6" height="9" viewBox="0 0 6 9"><path d="M1 0.5v8l4.5-4z" fill="#505050"/></svg>
<div style="left:644px;top:682px;width:630px;height:1.6px;background:#12477f;"></div>
<div style="left:644px;top:683.6px;width:630px;height:1.4px;background:#7f9cba;"></div>
<div style="left:951px;top:682px;width:13px;height:3px;background:#e4e9ef;"></div>
<div style="left:640px;top:716.7px;width:637px;height:2px;background:#0b3f7b;"></div>
<div style="left:800px;top:694px;width:174.5px;height:23px;background:#e9e9e9;border:1px solid #d9d9d9;border-bottom:none;border-radius:3px 3px 0 0;box-sizing:border-box;"></div>
<div style="left:651px;top:692px;width:146px;height:27px;border:2px solid #0b3f7b;border-bottom:none;border-radius:5px 5px 0 0;background:#fcfcfa;box-sizing:border-box;"></div>
<span id="t59" class="t" style="top:696.5px;font-size:12px;line-height:20px;color:#1f4e8c;letter-spacing:0.081px;left:663.5px;">Webフォーム項目設定</span>
<span id="t60" class="t" style="top:696.5px;font-size:12px;line-height:20px;color:#2b2118;letter-spacing:-0.022px;left:810px;">利用センシティブワード設定</span>
<div class="btn" style="left:645px;top:727px;width:111px;height:25px;"></div>
<svg class="i" style="left:652px;top:732px;" width="17" height="14" viewBox="0 0 17 14"><path d="M1 1.4h9M1 4.4h5.5M1 7.4h5M1 10.3h6M1 13.1h12.6" stroke="#0f85d8" stroke-width="1.1" fill="none"/><circle cx="12.6" cy="7.4" r="4.5" fill="#0f85d8" stroke="#f6f6f6" stroke-width="0.8"/><path d="M12.6 5v4.8M10.2 7.4h4.8" stroke="#fff" stroke-width="1.4"/></svg>
<span id="t61" class="t" style="top:730.6px;font-size:12px;line-height:20px;color:#2b2118;letter-spacing:0.000px;left:691px;">追加</span>
<div class="btn dis" style="left:760px;top:727px;width:113px;height:25px;"></div>
<svg class="i" style="left:768px;top:731px;" width="16" height="16" viewBox="0 0 16 16"><path d="M10.5 1.2l4 4L6 13.7l-4.8 1 1-4.8z" fill="#b5b5b5"/><path d="M1.4 14.4l1-3 2 2z" fill="#999"/></svg>
<span id="t62" class="t" style="top:730.6px;font-size:12px;line-height:20px;color:#a9a9a9;letter-spacing:0.000px;left:808px;">編集</span>
<div class="btn" style="left:877px;top:727px;width:112px;height:25px;"></div>
<svg class="i" style="left:885px;top:732px;" width="18" height="14" viewBox="0 0 18 14"><path d="M3 2.75h2.6V9h2.900L4.250 13.750 0 9h3z" fill="#0f88de"/><path d="M12.200 10.250h2.600V5.900h2.700L13.450 0.900 9.400 5.900h2.800z" fill="#0f88de"/></svg>
<span id="t63" class="t" style="top:730.2px;font-size:12px;line-height:20px;color:#2b2118;letter-spacing:-0.103px;left:906px;">表示順設定</span>
<div style="left:640px;top:760px;width:637px;height:29px;background:#efebe0;border-top:1px solid #d4d4d4;border-bottom:1px solid #cfcfcf;box-sizing:border-box;"></div>
<div style="left:640px;top:789px;width:620px;height:28px;background:#fff;"></div>
<div style="left:640px;top:817px;width:620px;height:28px;background:#f3f3f3;border-bottom:1px solid #d4d4d4;"></div>
<div style="left:640px;top:846px;width:620px;height:50px;background:#fff;"></div>
<div style="left:925px;top:761px;width:1px;height:84px;background:#d4d4d4;"></div>
<div style="left:926px;top:761px;width:1px;height:27px;background:#faf8f2;"></div>
<div style="left:1046px;top:761px;width:1px;height:84px;background:#d4d4d4;"></div>
<div style="left:1047px;top:761px;width:1px;height:27px;background:#faf8f2;"></div>
<div style="left:1125px;top:761px;width:1px;height:84px;background:#d4d4d4;"></div>
<div style="left:1126px;top:761px;width:1px;height:27px;background:#faf8f2;"></div>
<div style="left:1225px;top:761px;width:1px;height:84px;background:#d4d4d4;"></div>
<div style="left:1226px;top:761px;width:1px;height:27px;background:#faf8f2;"></div>
<span id="t64" class="t" style="top:765.4px;font-size:12px;line-height:20px;color:#2b2118;letter-spacing:-0.005px;left:648px;">項目名</span>
<span id="t65" class="t" style="top:765.4px;font-size:12px;line-height:20px;color:#2b2118;letter-spacing:-0.203px;left:933px;">入力タイプ</span>
<span id="t66" class="t" style="top:765.4px;font-size:12px;line-height:20px;color:#2b2118;letter-spacing:-0.250px;left:1053px;">必須設定</span>
<span id="t67" class="t" style="top:765.4px;font-size:12px;line-height:20px;color:#2b2118;letter-spacing:-0.203px;left:1133px;">最大文字数</span>
<span id="t68" class="t" style="top:765.4px;font-size:12px;line-height:20px;color:#2b2118;letter-spacing:0.219px;left:1233px;">値チ:</span>
<span id="t69" class="t" style="top:794.5px;font-size:11px;line-height:20px;color:#2b2118;letter-spacing:0.000px;left:646px;">メールアドレス</span>
<span id="t70" class="t" style="top:794.5px;font-size:11px;line-height:20px;color:#2b2118;letter-spacing:0.289px;left:931px;">テキスト入力(1行)</span>
<span id="t71" class="t" style="top:794.0px;font-size:11px;line-height:20px;color:#2b2118;left:935px;width:300px;text-align:center;">ON</span>
<span id="t72" class="t" style="top:793.8px;font-size:11px;line-height:20px;color:#2b2118;right:57.5px;letter-spacing:0.3px;">1000</span>
<span id="t73" class="t" style="top:794.5px;font-size:11px;line-height:20px;color:#2b2118;left:1231px;">メールアドレス形式</span>
<span id="t74" class="t" style="top:822.5px;font-size:11px;line-height:20px;color:#2b2118;letter-spacing:-0.500px;left:646px;">質問</span>
<span id="t75" class="t" style="top:822.5px;font-size:11px;line-height:20px;color:#2b2118;letter-spacing:0.273px;left:931px;">テキスト入力(複数行)</span>
<span id="t76" class="t" style="top:822.0px;font-size:11px;line-height:20px;color:#2b2118;left:935px;width:300px;text-align:center;">ON</span>
<span id="t77" class="t" style="top:821.8px;font-size:11px;line-height:20px;color:#2b2118;right:57.5px;letter-spacing:0.3px;">1000</span>
<div style="left:1260px;top:789px;width:17px;height:108px;background:#f1f1f1;"></div>
<svg class="i" style="left:1264.3px;top:795.3px;" width="9" height="5" viewBox="0 0 9 5"><path d="M0.300 4.5h7.600L4.100 0.200z" fill="#b6b6b6"/></svg>
<svg class="i" style="left:1264px;top:885px;" width="9" height="5" viewBox="0 0 9 5"><path d="M0.5 0.5h8L4.5 4.5z" fill="#a3a3a3"/></svg>
<div style="left:640px;top:896px;width:637px;height:17px;background:#f1f1f1;"></div>
<div style="left:1260px;top:896px;width:17px;height:17px;background:#dcdcdc;"></div>
<div style="left:658px;top:898px;width:393px;height:13px;background:#c1c1c1;"></div>
<svg class="i" style="left:646px;top:900.3px;" width="6" height="9" viewBox="0 0 6 9"><path d="M5 0.5v8L0.5 4.5z" fill="#a3a3a3"/></svg>
<svg class="i" style="left:1249px;top:900px;" width="6" height="9" viewBox="0 0 6 9"><path d="M1 0.5v8l4.5-4z" fill="#505050"/></svg>
<div style="left:0px;top:912.6px;width:1277px;height:1.4px;background:#d6d6d6;"></div>
</div></body></html>
